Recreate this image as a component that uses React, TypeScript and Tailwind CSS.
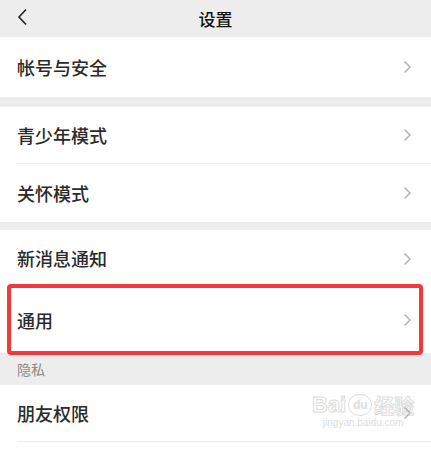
import React from "react";

const font = { fontFamily: '"Noto Sans CJK SC", "Noto Sans", sans-serif' };

function Chevron() {
  return (
    <svg width="9" height="14" viewBox="0 0 9 14" className="mr-[19px]">
      <path d="M1.5 1.5 L7 7 L1.5 12.5" fill="none" stroke="#b4b4b4" strokeWidth="1.5" />
    </svg>
  );
}

function Row({ label, divider = false, h = "h-[58px]" }: { label: string; divider?: boolean; h?: string }) {
  return (
    <div className="bg-white">
      <div className={`flex ${h} items-center justify-between pl-[17px]`}>
        <span className="text-[18px] font-medium text-[#2a2a2a]">{label}</span>
        <Chevron />
      </div>
      {divider && <div className="ml-[17px] h-px bg-[#ececec]" />}
    </div>
  );
}

export default function App() {
  return (
    <div className="relative h-[458px] w-[431px] overflow-hidden bg-[#ededed]" style={font}>
      <div className="relative flex h-[37px] items-center justify-center">
        <svg width="12" height="18" viewBox="0 0 12 18" className="absolute left-[16px] top-[8px]">
          <path d="M10 1.5 L3 9 L10 16.5" fill="none" stroke="#222" strokeWidth="1.6" />
        </svg>
        <span className="text-[17px] font-medium text-[#111]">设置</span>
      </div>

      <Row label="帐号与安全" h="h-[60px]" />
      <div className="h-[10px]" />
      <Row label="青少年模式" divider h="h-[56px]" />
      <Row label="关怀模式" h="h-[58px]" />
      <div className="h-[8px]" />
      <Row label="新消息通知" h="h-[57px]" />
      <Row label="通用" h="h-[66px]" />
      <div className="flex h-[32px] items-center pl-[17px] text-[14px] text-[#8a8a8a]">隐私</div>
      <Row label="朋友权限" divider h="h-[56px]" />
      <div className="h-[20px] bg-white" />

      {/* red annotation box */}
      <div className="absolute left-[7px] top-[284px] h-[71px] w-[416px] rounded-[4px] border-[4px] border-[#f2383a]" />

      {/* watermark */}
      <div className="pointer-events-none absolute left-[312px] top-[394px] flex flex-col items-center opacity-40">
        <div className="flex items-end">
          <span className="text-[22px] font-bold leading-none text-white [-webkit-text-stroke:1px_#aaa]" style={{ fontFamily: '"Liberation Sans", sans-serif' }}>Bai</span>
          <span className="mx-[2px] flex h-[22px] w-[24px] items-center justify-center rounded-full border border-[#aaa] text-[12px] font-bold leading-none text-[#aaa]" style={{ fontFamily: '"Liberation Sans", sans-serif' }}>du</span>
          <span className="text-[20px] font-bold leading-none text-white [-webkit-text-stroke:1px_#aaa]">经验</span>
        </div>
        <span className="mt-[2px] text-[10px] leading-none text-[#aaa]" style={{ fontFamily: '"Liberation Sans", sans-serif' }}>jingyan.baidu.com</span>
      </div>
    </div>
  );
}
